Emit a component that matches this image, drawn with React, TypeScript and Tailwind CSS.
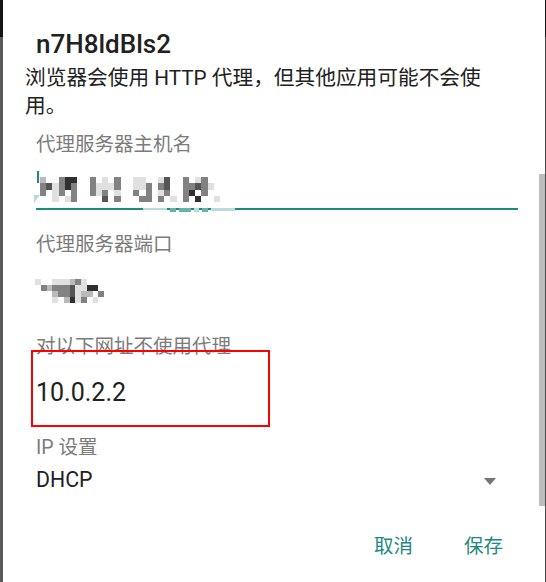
import React from 'react';

const shade: Record<string, string> = {
  l: '#e0e0e0',
  m: '#bababa',
  g: '#828282',
  d: '#555555',
  k: '#303030',
};

const hostRows = [
  'm..gkk..g.l.g..ll..ld..g.lg..',
  'gdlgkg..glllg..llg.gd..ggdgl.',
  'g.lg.g..glg.l..g.g.lg..gk.g..',
  '..l.lg....d.g...gg.g.l.g.k..l',
];

const portRows = [
  'l..lllmgl...',
  '.gmgggdllkk.',
  '...mggdlmm.g',
  '...l.mklg.l.',
];

function Mosaic({ rows, className }: { rows: string[]; className: string }) {
  const cols = rows[0].length;
  return (
    <svg
      className={className}
      viewBox={`0 0 ${cols} ${rows.length}`}
      preserveAspectRatio="none"
      shapeRendering="crispEdges"
    >
      {rows.map((row, y) =>
        row.split('').map((c, x) =>
          shade[c] ? <rect key={`${x}-${y}`} x={x} y={y} width={1} height={1} fill={shade[c]} /> : null,
        ),
      )}
    </svg>
  );
}

function Edge({ low }: { low: string }) {
  return (
    <div className="flex h-full flex-col">
      <div className="h-[37px] bg-[#141414]" />
      <div className={`flex-1 ${low}`} />
    </div>
  );
}

export default function App() {
  return (
    <div className="flex h-[582px] w-[546px] overflow-hidden bg-white font-[Roboto,'Noto_Sans_CJK_SC',sans-serif]">
      <div className="w-[3px]">
        <Edge low="bg-[#5a5a5a]" />
      </div>
      <div className="relative flex flex-1 flex-col">
        <h1 className="ml-[33px] pt-[29px] text-[26px] leading-[30px] font-medium text-[#212121]">n7H8ldBls2</h1>
        <p className="mt-[5px] ml-[22px] w-[490px] text-[20.7px] leading-[28px] text-[#212121]">
          浏览器会使用 HTTP 代理，但其他应用可能不会使用。
        </p>

        {/* 主机名 */}
        <div className="mt-[13px] ml-[33px] w-[482px]">
          <div className="text-[19.5px] leading-[24px] text-[#7b7b7b]">代理服务器主机名</div>
          <div className="relative h-[53px] border-b-2 border-[#1c8a7e]">
            <div className="absolute top-[14px] left-[1px] h-[12px] w-[2px] bg-[#1c8a7e]" />
            <div className="absolute top-[38px] left-[-2px] h-0 w-0 border-t-[8px] border-r-[6px] border-t-[#b4dcd6] border-r-transparent" />
            <Mosaic rows={hostRows} className="absolute top-[20px] left-[4px] h-[25px] w-[180px]" />
            <div className="absolute bottom-[-4px] left-[107px] flex h-[4px] items-start gap-[3px]">
              <div className="h-[2px] w-[24px] bg-[#b8ddd8]" />
              <div className="h-[4px] w-[6px] bg-[#66b3aa]" />
              <div className="h-[4px] w-[12px] bg-[#66b3aa]" />
              <div className="h-[4px] w-[5px] bg-[#b8ddd8]" />
              <div className="h-[4px] w-[6px] bg-[#66b3aa]" />
              <div className="h-[3px] w-[24px] bg-[#b8ddd8]" />
            </div>
          </div>
        </div>

        {/* 端口 */}
        <div className="mt-[23px] ml-[33px]">
          <div className="text-[19.5px] leading-[24px] text-[#7b7b7b]">代理服务器端口</div>
          <div className="h-[78px] pt-[22px]">
            <Mosaic rows={portRows} className="ml-[-1px] h-[24px] w-[69px]" />
          </div>
        </div>

        {/* 排除列表 */}
        <div className="ml-[33px]">
          <div className="text-[19.5px] leading-[24px] text-[#7b7b7b]">对以下网址不使用代理</div>
          <div className="pt-[20px] text-[25px] leading-[28px] text-[#212121]">10.0.2.2</div>
        </div>

        {/* IP 设置 */}
        <div className="mt-[29px] ml-[33px] w-[460px]">
          <div className="text-[19.5px] leading-[24px] text-[#7b7b7b]">IP 设置</div>
          <div className="mt-[7px] flex items-center justify-between">
            <span className="text-[21.3px] leading-[26px] text-[#212121]">DHCP</span>
            <svg width="12" height="7" viewBox="0 0 12 7" className="mt-[2px]">
              <path d="M0 0h12L6 7z" fill="#757575" />
            </svg>
          </div>
        </div>

        <div className="mt-[42px] flex justify-end gap-[51px] pr-[42px]">
          <button className="text-[19.5px] leading-[24px] text-[#1c8a7e]">取消</button>
          <button className="text-[19.5px] leading-[24px] text-[#1c8a7e]">保存</button>
        </div>

        {/* 标注框 */}
        <div className="absolute top-[350px] left-[28px] h-[77px] w-[239px] border-2 border-[#ff0000]" />
        {/* 滚动条 */}
        <div className="absolute top-[174px] right-0 h-[332px] w-[6px] bg-[#bdbdbd]" />
      </div>
      <div className="w-px">
        <Edge low="bg-[#4a4a4a]" />
      </div>
    </div>
  );
}
